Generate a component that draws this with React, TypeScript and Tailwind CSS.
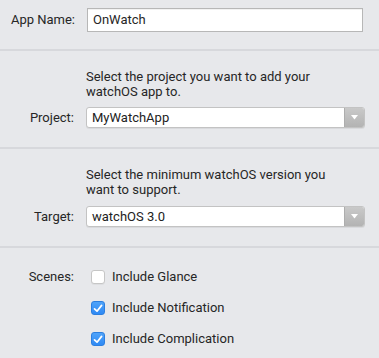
import React from 'react';

const FONT = { fontFamily: 'Roboto, "Liberation Sans", sans-serif' };

function PopUp({ value }: { value: string }) {
    return (
        <div className="flex h-[21px] w-[279px] rounded-[3px] border border-[#c3c3c3] bg-white shadow-[0_1px_0_rgba(0,0,0,0.06)] overflow-hidden">
            <div className="flex-1 flex items-center pl-[5px] text-[13px] text-[#222]">{value}</div>
            <div className="w-[20px] flex items-center justify-center bg-gradient-to-b from-[#c9c9c9] to-[#b3b3b3] border-l border-[#adadad]">
                <svg width="7" height="5" viewBox="0 0 7 5">
                    <path d="M0 0 L7 0 L3.5 4.5 Z" fill="#fff" />
                </svg>
            </div>
        </div>
    );
}

function Checkbox({ checked }: { checked: boolean }) {
    if (!checked) {
        return <div className="w-[14px] h-[14px] rounded-[3px] bg-white border border-[#c6c6c6] shadow-[0_1px_0_rgba(0,0,0,0.04)]" />;
    }
    return (
        <div className="w-[14px] h-[14px] rounded-[3px] bg-gradient-to-b from-[#4fa3f9] to-[#2f8af5] border border-[#2c7fe0] flex items-center justify-center">
            <svg width="10" height="9" viewBox="0 0 10 9">
                <path d="M1.5 4.8 L4 7.2 L8.6 1.4" fill="none" stroke="#fff" strokeWidth="1.7" strokeLinecap="round" strokeLinejoin="round" />
            </svg>
        </div>
    );
}

export default function App() {
    return (
        <div className="w-[379px] h-[358px] bg-[#e7e8eb] text-[#262626] text-[13px] overflow-hidden" style={FONT}>
            {/* App name */}
            <div className="h-[49px] pt-[8px] flex">
                <div className="w-[75px] text-right leading-[24px]">App Name:</div>
                <div className="ml-[12px] w-[276px] h-[24px] border border-[#b7b7b7] bg-white flex items-center pl-[5px] shadow-[inset_0_1px_0_rgba(0,0,0,0.05)]">
                    OnWatch
                </div>
            </div>
            <div className="h-[2px] bg-[#d7d8dc]" />

            {/* Project */}
            <div className="h-[96px] pt-[18px]">
                <div className="ml-[86px] leading-[15px]">
                    Select the project you want to add your<br />watchOS app to.
                </div>
                <div className="flex items-center mt-[8px]">
                    <div className="w-[74px] text-right">Project:</div>
                    <div className="ml-[12px]"><PopUp value="MyWatchApp" /></div>
                </div>
            </div>
            <div className="h-[2px] bg-[#d7d8dc]" />

            {/* Target */}
            <div className="h-[97px] pt-[18px]">
                <div className="ml-[86px] leading-[15px]">
                    Select the minimum watchOS version you<br />want to support.
                </div>
                <div className="flex items-center mt-[9px]">
                    <div className="w-[74px] text-right">Target:</div>
                    <div className="ml-[12px]"><PopUp value="watchOS 3.0" /></div>
                </div>
            </div>
            <div className="h-[2px] bg-[#d7d8dc]" />

            {/* Scenes */}
            <div className="pt-[22px] flex">
                <div className="w-[74px] text-right leading-[14px]">Scenes:</div>
                <div className="ml-[17px] flex flex-col gap-[17px]">
                    {[
                        { label: 'Include Glance', checked: false },
                        { label: 'Include Notification', checked: true },
                        { label: 'Include Complication', checked: true },
                    ].map(item => (
                        <div key={item.label} className="flex items-center gap-[7px] leading-[14px]">
                            <Checkbox checked={item.checked} />
                            <span>{item.label}</span>
                        </div>
                    ))}
                </div>
            </div>
        </div>
    );
}
